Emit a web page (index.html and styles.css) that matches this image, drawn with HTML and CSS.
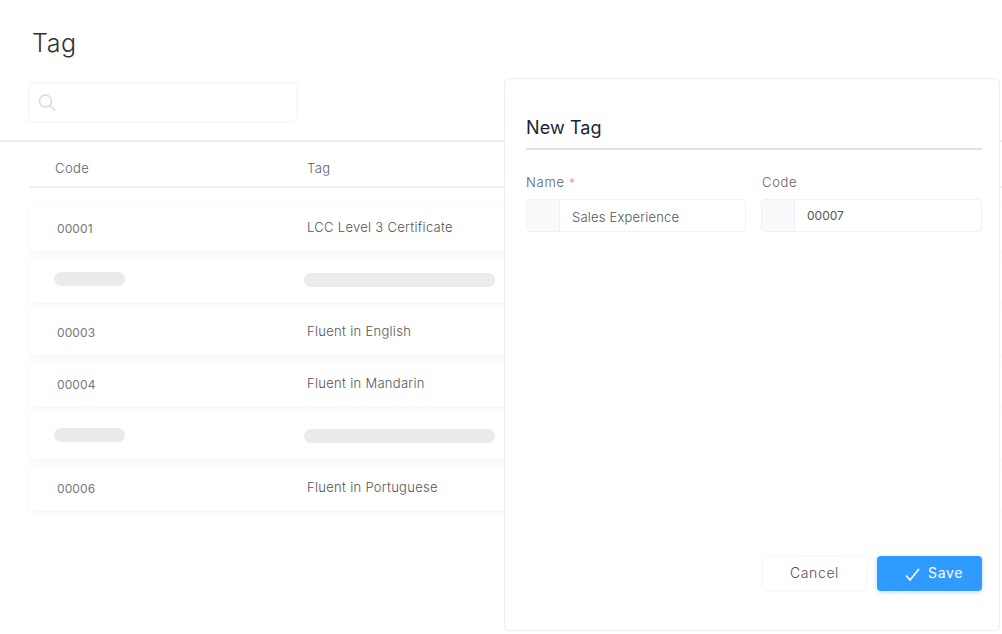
FILE: index.html
```html
<!DOCTYPE html>
<html lang="en">
<head>
    <meta charset="UTF-8">
    <meta name="viewport" content="width=device-width, initial-scale=1.0">
    <title>Tag</title>
    <link rel="stylesheet" href="styles.css">
</head>
<body>
    <div class="page">
        <h1 class="page-title">Tag</h1>

        <div class="toolbar">
            <div class="search">
                <svg class="search-icon" width="18" height="18" viewBox="0 0 18 18" fill="none">
                    <circle cx="7.5" cy="7" r="6" stroke="#dcdcdc" stroke-width="1.6"/>
                    <path d="M12 11.5l4.6 4.6" stroke="#dcdcdc" stroke-width="1.6" stroke-linecap="round"/>
                </svg>
            </div>
        </div>

        <div class="table">
            <div class="table-head">
                <span class="col-code">Code</span>
                <span class="col-tag">Tag</span>
            </div>
            <div class="row">
                <span class="col-code num">00001</span>
                <span class="col-tag">LCC Level 3 Certificate</span>
            </div>
            <div class="row">
                <span class="col-code"><span class="skeleton skeleton-code"></span></span>
                <span class="col-tag"><span class="skeleton skeleton-tag"></span></span>
            </div>
            <div class="row">
                <span class="col-code num">00003</span>
                <span class="col-tag">Fluent in English</span>
            </div>
            <div class="row">
                <span class="col-code num">00004</span>
                <span class="col-tag">Fluent in Mandarin</span>
            </div>
            <div class="row">
                <span class="col-code"><span class="skeleton skeleton-code"></span></span>
                <span class="col-tag"><span class="skeleton skeleton-tag"></span></span>
            </div>
            <div class="row">
                <span class="col-code num">00006</span>
                <span class="col-tag">Fluent in Portuguese</span>
            </div>
        </div>
    </div>

    <div class="panel">
        <h2 class="panel-title">New Tag</h2>
        <div class="form-grid">
            <div class="field">
                <label class="field-label">Name <span class="required">*</span></label>
                <div class="input">
                    <span class="input-addon"></span>
                    <span class="input-value">Sales Experience</span>
                </div>
            </div>
            <div class="field">
                <label class="field-label">Code</label>
                <div class="input">
                    <span class="input-addon"></span>
                    <span class="input-value input-value-dark">00007</span>
                </div>
            </div>
        </div>
        <div class="panel-actions">
            <button class="btn btn-cancel">Cancel</button>
            <button class="btn btn-save">
                <svg width="15" height="13" viewBox="0 0 15 13" fill="none">
                    <path d="M1 7.5l4 4.5L14 1" stroke="#fff" stroke-width="1.6"/>
                </svg>
                Save
            </button>
        </div>
    </div>
</body>
</html>
```

FILE: styles.css
```css
* {
    box-sizing: border-box;
}
body {
    font-family: Inter, "Open Sans", sans-serif;
    font-weight: 300;
    background: #fff;
    margin: 0;
    height: 634px;
    overflow: hidden;
    position: relative;
    color: #666;
}
.page-title {
    margin: 0;
    padding: 28px 0 0 32px;
    font-size: 25px;
    line-height: 30px;
    font-weight: 300;
    letter-spacing: 0.6px;
    color: #333;
}
.toolbar {
    padding: 26px 0 19px 30px;
    border-bottom: 2px solid #ececf0;
}
.search {
    width: 266px;
    height: 37px;
    background: #fff;
    border-radius: 3px;
    box-shadow: 0 0 6px rgba(0,0,0,0.08);
    display: flex;
    align-items: center;
    padding-left: 8px;
}
.table {
    margin-left: 30px;
}
.table-head {
    display: flex;
    height: 46px;
    padding-top: 8px;
    align-items: center;
    border-bottom: 2px solid #eeeef1;
    font-size: 13px;
    color: #5c5c6e;
    margin-bottom: 18px;
    letter-spacing: 0.45px;
}
.row {
    display: flex;
    align-items: center;
    height: 45px;
    padding-bottom: 3px;
    margin-bottom: 7px;
    background: #fff;
    border-radius: 3px;
    box-shadow: 0 1px 6px rgba(0,0,0,0.05);
    font-size: 13px;
    letter-spacing: 0.3px;
    color: #555;
}
.col-code {
    width: 277px;
    padding-left: 25px;
    flex-shrink: 0;
}
.col-tag {
    flex: 1;
}
.num {
    padding-left: 27px;
    padding-top: 2px;
    color: #777;
    font-size: 12px;
    font-weight: 400;
    letter-spacing: 0.1px;
}
.skeleton {
    display: block;
    height: 14px;
    border-radius: 7px;
    background: #ebebeb;
}
.skeleton-code {
    width: 71px;
    margin-top: -1px;
    margin-left: -1px;
}
.skeleton-tag {
    width: 191px;
    margin-left: -3px;
    margin-top: 1px;
}
.panel {
    position: absolute;
    left: 504px;
    top: 78px;
    width: 496px;
    height: 553px;
    background: #fff;
    border: 1px solid #e6edf4;
    border-radius: 5px;
    padding: 35px 17px 0 21px;
    display: flex;
    flex-direction: column;
}
.panel-title {
    margin: 0;
    font-size: 18px;
    line-height: 28px;
    font-weight: 400;
    letter-spacing: 0.1px;
    color: #1e1e3c;
    padding-bottom: 6px;
    border-bottom: 2px solid #e2e2e6;
}
.form-grid {
    display: grid;
    grid-template-columns: 220px 221px;
    column-gap: 15px;
    margin-top: 23px;
}
.field-label {
    display: block;
    height: 18px;
    font-size: 13px;
    line-height: 18px;
    color: #5f5f6b;
    letter-spacing: 0.7px;
    margin-bottom: 8px;
}
.field:last-child .field-label {
    padding-left: 1px;
}
.required {
    color: #f5808f;
    font-size: 12px;
    line-height: 1;
}
.input {
    display: flex;
    height: 33px;
    border: 1px solid #eef2f8;
    border-radius: 4px;
    overflow: hidden;
    font-size: 13px;
    letter-spacing: 0.2px;
    color: #555;
}
.input-addon {
    width: 33px;
    background: #f9fafc;
    border-right: 1px solid #eef2f8;
}
.input-value {
    padding: 2px 0 0 12px;
    line-height: 31px;
}
.input-value-dark {
    padding-left: 12px;
    padding-top: 0;
    color: #555;
    font-size: 12px;
    font-weight: 400;
    letter-spacing: 0;
}
.panel-actions {
    margin-top: auto;
    margin-bottom: 39px;
    display: flex;
    justify-content: flex-end;
    align-items: center;
    gap: 11px;
}
.btn {
    font-family: inherit;
    font-size: 14px;
    font-weight: 300;
    letter-spacing: 0.6px;
    border: none;
    border-radius: 4px;
    display: flex;
    align-items: center;
    justify-content: center;
    padding-bottom: 4px;
}
.btn-cancel {
    width: 103px;
    height: 33px;
    background: #fff;
    color: #555;
    box-shadow: 0 0 5px rgba(0,0,0,0.07);
}
.btn-save {
    width: 105px;
    height: 35px;
    gap: 8px;
    padding-left: 9px;
    padding-right: 0;
    background: #2f9bff;
    color: #fff;
    font-weight: 400;
    box-shadow: 0 1px 4px rgba(47,155,255,0.35);
}
.btn-save svg {
    margin-top: 5px;
}
```
